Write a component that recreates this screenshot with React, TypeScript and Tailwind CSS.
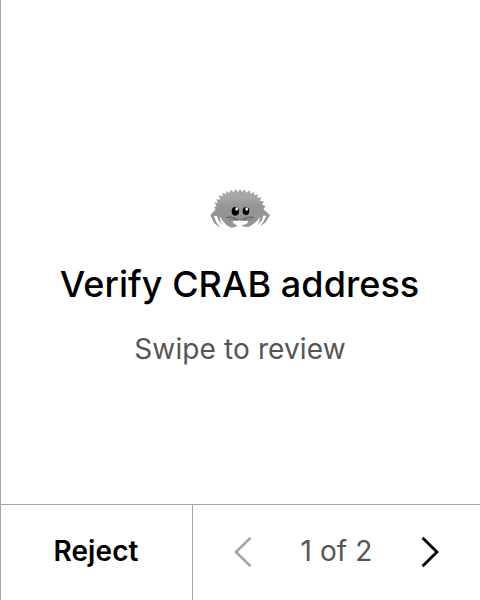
function Crab() {
  return (
    <svg width="80" height="60" viewBox="0 0 240 180" aria-hidden="true">
      <defs>
        <linearGradient id="shell" x1="0" y1="0" x2="0" y2="1">
          <stop offset="0" stopColor="#aaaaaa" />
          <stop offset="0.3" stopColor="#a4a4a4" />
          <stop offset="0.55" stopColor="#959595" />
          <stop offset="1" stopColor="#959595" />
        </linearGradient>
      </defs>
      <g fill="#969696">
        <path d="M49 94 L31 106 L43 130 L61 143 L49 127 L42 108 L55 103Z" />
        <path d="M50 104 L55 119 L67 135 L61 120 L61 108Z" />
        <path d="M191 94 L210 106 L197 127 L181 139 L191 124 L199 108 L185 103Z" />
        <path d="M190 103 L187 119 L173 135 L179 119 L178 107Z" />
      </g>
      <path
        fill="url(#shell)"
        d="M32 104 L46 89 L43 80 L50 80 L43 67 L53 69 L49 57 L60 59 L57 46 L68 49 L67 38 L78 43 L79 33 L88 39 L92 29 L101 37 L107 27 L114 36 L120 27 L126 36 L134 28 L139 38 L149 31 L152 41 L162 36 L163 46 L174 43 L172 53 L184 52 L180 63 L192 64 L186 74 L197 78 L190 87 L209 105 L195 106 L180 111 L166 122 L73 122 L61 111 L45 107Z"
      />
      <path fill="#959595" d="M61 106 L86 111 L103 116 L109 120 L97 125 L104 133 L112 135 L105 142 L94 143 L80 136 L66 120Z" />
      <path fill="#959595" d="M179 106 L157 110 L139 116 L132 121 L145 124 L139 132 L123 135 L134 140 L147 140 L159 133 L174 120Z" />
      <path fill="#fff" d="M101 129 L110 122 L131 122 L144 127 L138 133 L124 134 L117 136 L110 134Z" />
      <path fill="#888" d="M103 108 Q121 122 141 108 L137 119 Q120 125 104 118Z" />
      <g fill="none" stroke="#343434" strokeWidth="2">
        <path d="M78 113 Q94 107 106 117 L114 121" />
        <path d="M162 113 Q149 107 138 116 L128 121" />
        <path d="M87 121 L102 118 M146 120 L158 117" strokeDasharray="3 3" />
      </g>
      <ellipse cx="106" cy="94" rx="11" ry="13" fill="#000" />
      <ellipse cx="138" cy="93" rx="10" ry="12" fill="#000" />
      <ellipse cx="110" cy="87" rx="4" ry="5" fill="#fff" />
      <ellipse cx="140" cy="87" rx="4" ry="5" fill="#fff" />
    </svg>
  );
}

export default function App() {
  return (
    <main className="flex h-[600px] w-[480px] flex-col border-l border-[#a6a6a6] bg-white font-['Inter',sans-serif] text-black">
      <section className="flex h-[504px] flex-col items-center pt-[180px] pr-px">
        <Crab />
        <h1 className="mt-[20px] pr-px text-[36px] leading-[48px] font-medium tracking-[0.04px]">Verify CRAB address</h1>
        <p className="mt-[23px] text-[28px] leading-[36px] tracking-[0.12px] text-[#555555]">Swipe to review</p>
      </section>
      <footer className="flex h-[96px] border-t border-[#a6a6a6]">
        <button className="w-[192px] border-r border-[#a6a6a6] pr-px pb-1 text-[28px] font-semibold tracking-[0.1px]">Reject</button>
        <div className="flex flex-1 items-center justify-between pr-[41px] pb-px pl-[41px]">
          <svg width="18" height="32" viewBox="0 0 18 32" fill="none" stroke="#a6a6a6" strokeWidth="2.6" aria-label="Previous">
            <path d="M16.5 1.8 L2 16 L16.5 30.2" />
          </svg>
          <span className="pb-[2px] text-[28px] tracking-[0.1px] text-[#555555]">1 of 2</span>
          <svg width="18" height="32" viewBox="0 0 18 32" fill="none" stroke="#000" strokeWidth="2.9" aria-label="Next">
            <path d="M1.5 1.8 L16 16 L1.5 30.2" />
          </svg>
        </div>
      </footer>
    </main>
  );
}
